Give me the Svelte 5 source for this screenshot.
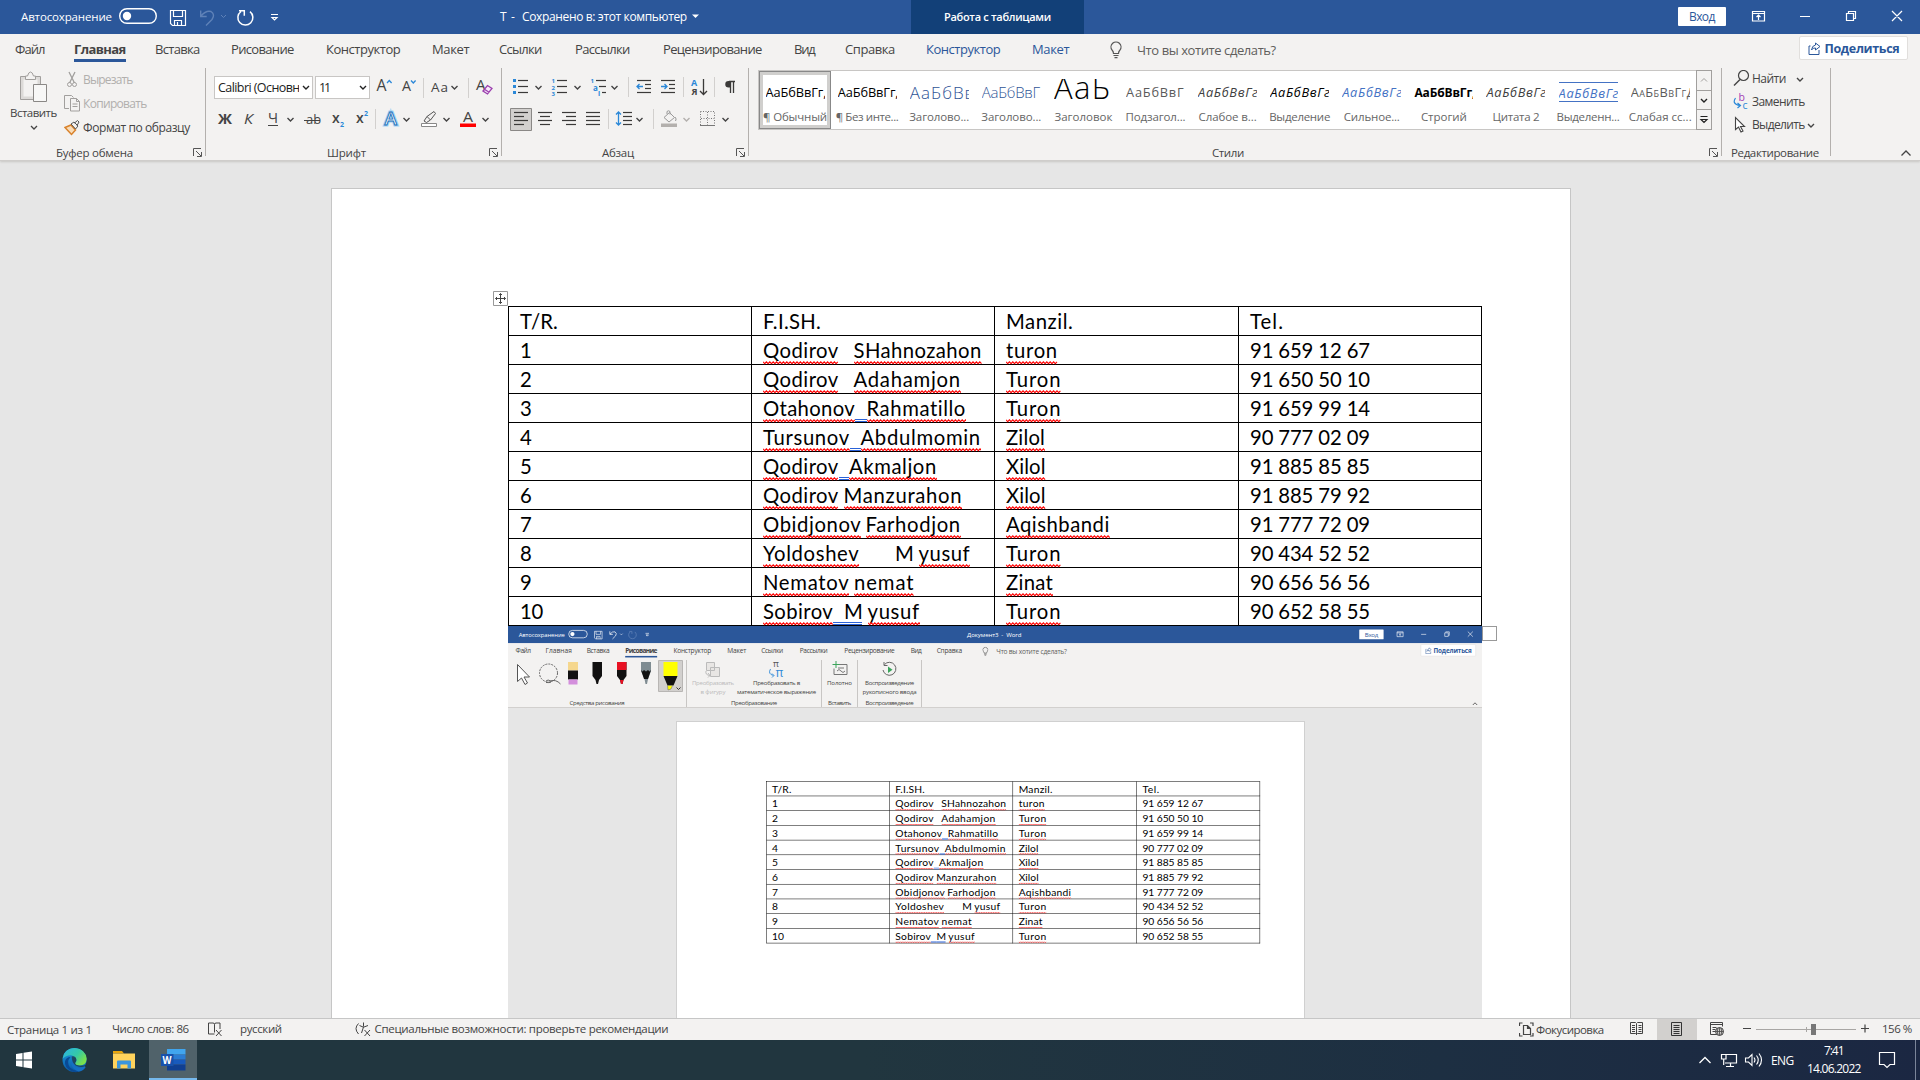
<script>
  // Stretches or tightens letter spacing so that a label fills its set width.
  function fit(el, w) {
    const n = el.textContent.length;
    if (n < 2) return;
    const range = document.createRange();
    range.selectNodeContents(el);
    const k = el.getBoundingClientRect().width / w || 1;
    const natural = range.getBoundingClientRect().width / k;
    el.style.letterSpacing = (w - natural) / (n - 0.5) + 'px';
  }

  // Lays items [width, drawing] one after another from x.
  function tiles(x, items) {
    let at = x;
    return items.map(([w, d]) => {
      const t = { x: at, w, d };
      at += w;
      return t;
    });
  }

  const chev = (x, y, c = '#444') => `<path d="M${x} ${y}l3 3 3-3" stroke="${c}" stroke-width="1.4"/>`;
  const vsep = (x, y) => `<path d="M${x}.5 ${y}v20" stroke="#d2d0ce"/>`;
  const lines = (a) => a.map(([x, y, w]) => `<path d="M${x} ${y}h${w}" stroke="#3b3a39" stroke-width="1.2"/>`).join('');
  const tx = (x, y, s, size, extra = '') => `<text x="${x}" y="${y}" font-size="${size}" stroke="none" fill="#444" ${extra}>${s}</text>`;

  const fontRow1 = tiles(369, [
    [29, tx(375.5, 91, 'А', 17, 'textLength="10" lengthAdjust="spacingAndGlyphs"') + '<path d="M386 83l2.300-2.500 2.300 2.500" stroke="#2b88d8" stroke-width="1.300"/>'],
    [24, tx(401, 91, 'А', 14, 'textLength="9" lengthAdjust="spacingAndGlyphs"') + '<path d="M410 80.500l2.300 2.500 2.300-2.500" stroke="#2b88d8" stroke-width="1.300"/>'],
    [4, vsep(422, 78)],
    [38, tx(430, 91.5, 'Аа', 13.5, 'textLength="17"') + chev(450.500, 86)],
    [6, vsep(467, 78)],
    [30, tx(475, 90, 'А', 15, 'textLength="9.500" lengthAdjust="spacingAndGlyphs"') + '<path d="M482 91l4.500-5.500 4.500 3-4.500 5.500zM483.500 89.200l4.500 3" stroke="#9b3fae" stroke-width="1.300" fill="#f7e9fa"/>']
  ]);
  const fontRow2 = tiles(212, [
    [26, tx(218, 124, 'Ж', 15, 'font-weight="700" textLength="14" lengthAdjust="spacingAndGlyphs"')],
    [24, tx(244, 124, 'К', 15, 'font-style="italic" textLength="9" lengthAdjust="spacingAndGlyphs"')],
    [34, tx(268, 123, 'Ч', 14.5, '') + '<path d="M268 125.500h10" stroke="#444"/>' + chev(287.500, 118)],
    [31, tx(306, 124, 'ab', 13) + '<path d="M304 120.500h16" stroke="#444"/>'],
    [24, tx(332, 123, 'x', 14, 'font-weight="600"') + tx(340, 127, '2', 7, 'style="fill:#2b88d8" font-weight="700"')],
    [22, tx(356, 123, 'x', 14, 'font-weight="600"') + tx(364, 116, '2', 7, 'style="fill:#2b88d8" font-weight="700"')],
    [4, vsep(375, 109)],
    [38, '<text x="384.500" y="124.500" font-size="18" font-weight="600" stroke="#a6d3f5" stroke-width="3" fill="#fff" textLength="12.500" lengthAdjust="spacingAndGlyphs">А</text><text x="384.500" y="124.500" font-size="18" font-weight="600" stroke="#1a6fb8" stroke-width=".9" fill="#fff" textLength="12.500" lengthAdjust="spacingAndGlyphs">А</text>' + chev(403.500, 118)],
    [38, '<path d="M424 121l3-4.500 7-5 1.500 2-5 6.500-4 2.500zM427 116.500l3.500 3.500" stroke="#555"/><path d="M421.500 123.500h15v3h-15z" stroke="#888" fill="#fff"/>' + chev(443.500, 118)],
    [39, tx(463, 122, 'А', 14.5, 'textLength="10" lengthAdjust="spacingAndGlyphs"') + '<path d="M460 123.500h16v3.500h-16z" fill="#f00" stroke="none"/>' + chev(482.500, 118)]
  ]);
  const parRow1 = tiles(508, [
    [38, [79, 85, 91].map((y) => `<path d="M513 ${y}h3v3h-3z" fill="#2b88d8" stroke="none"/>`).join('') + lines([[518, 80.500, 10], [518, 86.500, 10], [518, 92.500, 10]]) + chev(535.500, 86)],
    [40, tx(551.500, 83, '1', 6, 'font-weight="700" style="fill:#2b88d8"') + tx(551.500, 89.500, '2', 6, 'font-weight="700" style="fill:#2b88d8"') + tx(551.500, 96, '3', 6, 'font-weight="700" style="fill:#2b88d8"') + lines([[557, 80.500, 10], [557, 86.500, 10], [557, 92.500, 10]]) + chev(574.500, 86)],
    [38, tx(590.500, 83, '1', 6, 'font-weight="700" style="fill:#2b88d8"') + tx(593, 90.500, 'a', 8, 'font-weight="700" style="fill:#2b88d8"') + tx(598, 96, 'i', 7, 'font-weight="700" style="fill:#2b88d8"') + lines([[596, 80.500, 10], [599, 86.500, 7], [602, 92.500, 4]]) + chev(611.500, 86)],
    [8, vsep(628, 77)],
    [25, lines([[637, 80.500, 14], [645, 84.500, 6], [645, 88.500, 6], [637, 92.500, 14]]) + '<path d="M643 86.500h-6M639.500 84l-2.500 2.500 2.500 2.500" stroke="#2b88d8" stroke-width="1.300"/>'],
    [23, lines([[661, 80.500, 14], [669, 84.500, 6], [669, 88.500, 6], [661, 92.500, 14]]) + '<path d="M661 86.500h6M664.500 84l2.500 2.500-2.500 2.500" stroke="#2b88d8" stroke-width="1.300"/>'],
    [6, vsep(683, 77)],
    [25, tx(691, 85.500, 'А', 9, 'font-weight="700" style="fill:#2b88d8"') + tx(691.500, 95, 'Я', 9, 'font-weight="700"') + '<path d="M703.500 79v15M700 91l3.500 3.500 3.500-3.500" stroke="#3b3a39" stroke-width="1.300"/>'],
    [7, vsep(714, 77)],
    [22, '<path d="M735 81.500h-6M730.500 81v12M733.500 81v12" stroke="#3b3a39" stroke-width="1.300"/><path d="M731 81h-2.500a3 3 0 0 0 0 6.500h2.500z" fill="#3b3a39" stroke="none"/>']
  ]);
  const al = (x, shorts) => lines([[x, 112.500, 14], [x + shorts, 116.500, 10], [x, 120.500, 14], [x + shorts, 124.500, 10]]);
  const parRow2 = tiles(508, [
    [26, '<path d="M510.500 108.500h21v22h-21z" fill="#d2d0ce" stroke="#8a8886"/>' + al(514, 0)],
    [24, al(538, 2)],
    [24, al(562, 4)],
    [24, lines([[586, 112.500, 14], [586, 116.500, 14], [586, 120.500, 14], [586, 124.500, 14]])],
    [5, vsep(608, 109)],
    [36, lines([[623, 112.500, 9], [623, 116.500, 9], [623, 120.500, 9], [623, 124.500, 9]]) + '<path d="M618.500 112v13M616 114.500l2.500-2.500 2.500 2.500M616 122.500l2.500 2.500 2.500-2.500" stroke="#2b88d8" stroke-width="1.300"/>' + chev(636.500, 118)],
    [12, vsep(653, 109)],
    [40, '<path d="M664 117.500l5.500-5 5 5-5.500 4.500zM667 114v-2.500q1.500-1.500 3 0v3M675 117q2 2 .500 4" stroke="#999"/><path d="M661 123.500h16v3.500h-16z" fill="#b3b0ad" stroke="none"/>' + chev(683.500, 118, '#b3b0ad')],
    [37, '<path d="M700.500 111.500h14v14M700.500 111.500v14M707.500 112v13M701 118.500h13" stroke="#777" stroke-dasharray="1 1.500"/><path d="M700 125.500h15" stroke="#777"/>' + chev(722.500, 118)]
  ]);

  const tabs = [
    ['Файл', 15, 30], ['Главная', 74, 52], ['Вставка', 155, 45], ['Рисование', 231, 63], ['Конструктор', 326, 74.500],
    ['Макет', 432, 37.500], ['Ссылки', 499, 43], ['Рассылки', 575, 55], ['Рецензирование', 663, 99], ['Вид', 794, 21], ['Справка', 845, 50]
  ];
  const tableTabs = [['Конструктор', 926, 74.500], ['Макет', 1032, 37.500]];
  const spaced = (list) => list.map((t, i) => ({ label: t[0], w: t[2], gap: t[1] - (i ? list[i - 1][1] + list[i - 1][2] : 0) }));
  const allTabs = spaced([...tabs, ...tableTabs]);
  const plainTabs = spaced(tabs);

  const styles = [
    ['АаБбВвГг,', 61, '¶ Обычный', 64, 'plain'], ['АаБбВвГг,', 61, '¶ Без инте...', 63, 'plain'],
    ['АаБбВв', 65, 'Заголово...', 60, 'h1'], ['АаБбВвГ', 58, 'Заголово...', 60, 'h2'], ['АаБ', 57, 'Заголовок', 58, 'title'],
    ['АаБбВвГ', 58, 'Подзагол...', 60, 'sub'], ['АаБбВвГг', 60, 'Слабое в...', 58, 'it grey'], ['АаБбВвГг', 60, 'Выделение', 61, 'it'],
    ['АаБбВвГг', 60, 'Сильное...', 56, 'it blue'], ['АаБбВвГг,', 61, 'Строгий', 46, 'strong'], ['АаБбВвГг', 60, 'Цитата 2', 47, 'it grey'],
    ['АаБбВвГг', 60, 'Выделенн...', 63, 'it blue ruled'], ['АаБбВвГгД', 65, 'Слабая сс...', 63, 'caps']
  ];

  // Table rows: each name part is [text, width, mark]; marks: r = spelling, b = grammar.
  const rows = [
    [[['Qodirov', 75.500, 'r'], ['', 15], ['SHahnozahon', 128, 'r']], ['turon', 51.500], '91 659 12 67'],
    [[['Qodirov', 75.500, 'r'], ['', 15], ['Adahamjon', 107, 'r']], ['Turon', 55], '91 650 50 10'],
    [[['Otahonov', 92, 'r'], ['', 11.500, 'b'], ['Rahmatillo', 99.500, 'r']], ['Turon', 55], '91 659 99 14'],
    [[['Tursunov', 86.500, 'r'], ['', 11, 'b'], ['Abdulmomin', 120, 'r']], ['Zilol', 39], '90 777 02 09'],
    [[['Qodirov', 75.500, 'r'], ['', 10.500, 'b'], ['Akmaljon', 87.500, 'r']], ['Xilol', 39.500], '91 885 85 85'],
    [[['Qodirov', 75.500, 'r'], ['', 5], ['Manzurahon', 118.500, 'r']], ['Xilol', 39.500], '91 885 79 92'],
    [[['Obidjonov', 98, 'r'], ['', 4.500], ['Farhodjon', 95, 'r']], ['Aqishbandi', 103.500], '91 777 72 09'],
    [[['Yoldoshev', 96, 'r'], ['', 36], ['M', 18, ''], ['', 5.500], ['yusuf', 51.500, 'r']], ['Turon', 55], '90 434 52 52'],
    [[['Nematov', 86, 'r'], ['', 5], ['nemat', 60, 'r']], ['Zinat', 47], '90 656 56 56'],
    [[['Sobirov', 70, 'r'], ['', 11, 'b'], ['M', 18, 'b'], ['', 5.500], ['yusuf', 52, 'r']], ['Turon', 55], '90 652 58 55']
  ];
  const wave = (w) => {
    let d = 'M0 .8', up = false;
    for (let x = 1.7; x <= w + 1; x += 1.7) { d += `L${x} ${up ? 0.8 : 2.6}`; up = !up; }
    return d;
  };
</script>

{#snippet t(text, w, cls = '')}<span class="t {cls}" style:width="{w}px" use:fit={w}>{text}</span>{/snippet}

{#snippet strip(items, y, h)}
  <div class="strip">
    {#each items as i}
      <svg width={i.w} height={h} viewBox="{i.x} {y} {i.w} {h}">{@html i.d}</svg>
    {/each}
  </div>
{/snippet}

{#snippet launcher()}
  <svg class="launch" width="9" height="9" viewBox="0 0 9 9"><path d="M.5 8V.5H8M3 3l5 5M8.500 4v4.500H4" stroke="#555" /></svg>
{/snippet}

{#snippet titlebar(inner)}
  <div class="titlebar">
    {@render t('Автосохранение', 91, 'auto')}
    <svg width="180" height="34" viewBox="112 0 180 34" stroke="#fff">
      <rect x="119.700" y="8.700" width="36.600" height="14.600" rx="7.300" stroke-width="1.400" />
      <circle cx="127" cy="16" r="4.200" fill="#fff" stroke="none" />
      <path d="M170.500 10.500h15v15h-13l-2-2zM173.500 10.500v6h9v-6M174.500 25.500v-5h7v5M177.500 25v-3" stroke-width="1.200" />
      <path d="M200.700 10.500v6h6M201 16q5-6 10-4.500 4.500 3 1 8l-6 6" stroke={inner ? '#fff' : '#5f82b8'} stroke-width="1.400" />
      <path d="M221 15l2.500 2.500 2.500-2.500" stroke={inner ? '#fff' : '#5f82b8'} />
      <path d="M241 11.500a7.500 7.500 0 1 0 9 .2M239 10.700h5.300v5" stroke={inner ? '#5f82b8' : '#fff'} stroke-width="1.500" />
      <path d="M271 14.500h7M272 17.500l2.500 2.500 2.500-2.500z" stroke-width="1.200" />
    </svg>
    {#if inner}
      <div class="doc inner-doc">{@render t('Документ3  -  Word', 107)}</div>
    {:else}
      <div class="doc">
        {@render t('T', 7)}{@render t('-', 5)}{@render t('Сохранено в: этот компьютер', 165)}
        <svg width="7" height="4" viewBox="0 0 7 4"><path d="M0 .5h7L3.500 4z" fill="#fff" stroke="none" /></svg>
      </div>
      <div class="context">{@render t('Работа с таблицами', 107)}</div>
    {/if}
    <div class="login">{@render t('Вход', 26)}</div>
    <svg width="194" height="34" viewBox="1726 0 194 34" stroke="#fff">
      <path d="M1752.500 11.500h12v9.500h-12zM1752.500 13.500h12M1758.500 20v-4.500M1756.500 17l2-2 2 2M1800 16.500h10M1846.500 13.500h7v7h-7zM1848.500 13v-1.500h7v7h-1.500M1892 11l10 10M1902 11l-10 10" stroke-width="1.200" />
    </svg>
  </div>
{/snippet}

{#snippet tabbar(inner)}
  <div class="tabs">
    {#each inner ? plainTabs : allTabs as tab, i}
      <div class="tab" class:on={i === (inner ? 3 : 1)} class:tool={i > 10} style:margin-left="{tab.gap}px">{@render t(tab.label, tab.w)}</div>
    {/each}
    <svg class="bulb" width="12" height="18" viewBox="0 0 12 18"><path d="M3.500 12.500q0-2-1.500-3.500a5 5 0 1 1 8 0q-1.500 1.500-1.500 3.500zM3.500 14.500h5M4.500 16.700h3" stroke="#555" stroke-width="1.200" /></svg>
    <div class="ask">{@render t('Что вы хотите сделать?', 139)}</div>
    <div class="share">
      <svg width="13" height="13" viewBox="0 0 13 13"><path d="M2.500 4H1v8.500h10V8M7.500 1l4.500 3.500L7.500 8V6Q5 5.500 3.500 8 4 3.500 7.500 3z" stroke="#2b579a" /></svg>
      {@render t('Поделиться', 75)}
    </div>
  </div>
{/snippet}

{#snippet word(text, w, mark)}
  <span class="word" style:width="{w}px">
    {#if text}{@render t(text, w)}{/if}
    {#if mark === 'r'}<svg class="wavy" width={w} height="4" viewBox="0 0 {w} 4"><path d={wave(w)} stroke="#f00" stroke-width="1.100" /></svg>{/if}
    {#if mark === 'b'}<i class="double"></i>{/if}
  </span>
{/snippet}

{#snippet contacts()}
  <div class="table">
    <div class="cell">{@render t('T/R.', 38)}</div>
    <div class="cell">{@render t('F.I.SH.', 58)}</div>
    <div class="cell">{@render t('Manzil.', 67)}</div>
    <div class="cell">{@render t('Tel.', 33.500)}</div>
    {#each rows as [name, place, tel], i}
      <div class="cell">{@render t(String(i + 1), i === 9 ? 23 : 11.500)}</div>
      <div class="cell">{#each name as [s, w, m]}{@render word(s, w, m)}{/each}</div>
      <div class="cell">{@render word(place[0], place[1], 'r')}</div>
      <div class="cell">{@render t(tel, 120)}</div>
    {/each}
  </div>
{/snippet}

<div class="screen">
  {@render titlebar(false)}
  {@render tabbar(false)}

  <div class="ribbon">
    <section class="group clip">
      <div class="body">
        <div class="paste">
          <svg width="29" height="31" viewBox="22 71 29 31">
            <path d="M23.500 76.500h20v23h-20z" stroke="#a19f9d" fill="#dcdad8" /><path d="M26.500 79.500h14v17h-14z" fill="#f3f2f1" stroke="none" />
            <path d="M28.500 79.500v-3.500h2q1-4 3-4t3 4h2v3.500z" stroke="#a19f9d" fill="#f3f2f1" />
            <path d="M36.500 84.500h13v17h-13z" stroke="#8a8886" fill="#f7f7f6" />
          </svg>
          {@render t('Вставить', 47)}
          <svg width="8" height="5" viewBox="0 0 8 5"><path d="M1 1l3 3 3-3" stroke="#444" stroke-width="1.300" /></svg>
        </div>
        <div class="cmds">
          <div class="cmd off">
            <svg width="18" height="17" viewBox="64 71 18 17"><path d="M69 72l5.500 11M75 72l-5.500 11" stroke="#a19f9d" stroke-width="1.300" /><circle cx="69.500" cy="84.500" r="2" stroke="#a19f9d" /><circle cx="74.500" cy="84.500" r="2" stroke="#a19f9d" /></svg>
            {@render t('Вырезать', 50)}
          </div>
          <div class="cmd off">
            <svg width="18" height="17" viewBox="64 95 18 17"><path d="M69 108.500h-4.500v-13h7l2 2M70.500 98.500h6l3 3v9.500h-9zM76.500 98.500v3h3M72.500 104h5M72.500 106.500h5" stroke="#a19f9d" /></svg>
            {@render t('Копировать', 64)}
          </div>
          <div class="cmd">
            <svg width="18" height="17" viewBox="64 118 18 17"><path d="M65 126.500l6-2.500 4.500 5-4 4.500z" stroke="#d9822b" fill="#f8dcb8" stroke-width="1.500" /><path d="M71 123l3-2 4 4-2.500 3zM74.500 122l3-2.500 1.500 1.500-2 3.500" stroke="#555" /></svg>
            {@render t('Формат по образцу', 107)}
          </div>
        </div>
      </div>
      <div class="foot"><i></i>{@render t('Буфер обмена', 77)}{@render launcher()}</div>
    </section>

    <section class="group font">
      <div class="body col">
        <div class="row1">
          <div class="combo name"><span class="clipname">{@render t('Calibri (Основн', 82)}</span><svg width="8" height="5" viewBox="0 0 8 5"><path d="M1 1l3 3 3-3" stroke="#222" stroke-width="1.400" /></svg></div>
          <div class="combo size">{@render t('11', 11)}<svg width="8" height="5" viewBox="0 0 8 5"><path d="M1 1l3 3 3-3" stroke="#222" stroke-width="1.400" /></svg></div>
          {@render strip(fontRow1, 73, 27)}
        </div>
        <div class="row2 f2">{@render strip(fontRow2, 105, 27)}</div>
      </div>
      <div class="foot"><i></i>{@render t('Шрифт', 39)}{@render launcher()}</div>
    </section>

    <section class="group par">
      <div class="body col">
        <div class="row1 p1">{@render strip(parRow1, 73, 27)}</div>
        <div class="row2 p1">{@render strip(parRow2, 105, 27)}</div>
      </div>
      <div class="foot"><i></i>{@render t('Абзац', 32)}{@render launcher()}</div>
    </section>

    <section class="group sty">
      <div class="gallery">
        {#each styles as [sample, sw, label, lw, cls], i}
          <div class="style" class:sel={i === 0}>
            <div class="sample {cls}">{@render t(sample, sw)}</div>
            {@render t(label, lw, 'name')}
          </div>
        {/each}
        <div class="scroller">
          <svg width="14" height="19" viewBox="0 0 14 19"><path d="M4 10.500l3-3 3 3" stroke="#a19f9d" /></svg>
          <svg width="14" height="18" viewBox="0 0 14 18"><path d="M4 8l3 3 3-3" stroke="#222" stroke-width="1.400" /></svg>
          <svg width="14" height="18" viewBox="0 0 14 18"><path d="M3.500 6.500h7M4 9.500l3 3 3-3z" stroke="#222" stroke-width="1.200" /></svg>
        </div>
      </div>
      <div class="foot"><i></i>{@render t('Стили', 32)}{@render launcher()}</div>
    </section>

    <section class="group edit">
      <div class="finds">
        <div class="cmd">
          <svg width="18" height="18" viewBox="1733 70 18 18"><circle cx="1743.500" cy="75.500" r="5" stroke="#444" stroke-width="1.200" /><path d="M1740 79.500l-6 6" stroke="#444" stroke-width="1.400" /></svg>
          {@render t('Найти', 34)}
          <svg class="dd" width="8" height="5" viewBox="0 0 8 5"><path d="M1 1l3 3 3-3" stroke="#444" stroke-width="1.400" /></svg>
        </div>
        <div class="cmd">
          <svg width="18" height="18" viewBox="1733 93 18 18"><text x="1738.500" y="101" font-size="10.500" fill="#a33fb5" stroke="none">b</text><text x="1742.500" y="109" font-size="10.500" fill="#2b88d8" stroke="none">c</text><path d="M1735.500 98q-4 6 4.500 7.500M1737.500 103l3 2.500-3 2.500" stroke="#2b88d8" stroke-width="1.200" /></svg>
          {@render t('Заменить', 53)}
        </div>
        <div class="cmd">
          <svg width="18" height="18" viewBox="1733 116 18 18"><path d="M1735.500 117.500v12l3-2.500 2.500 5 2-1-2.500-4.500h4z" stroke="#444" stroke-width="1.100" fill="#fff" /></svg>
          {@render t('Выделить', 53)}
          <svg class="near" width="8" height="5" viewBox="0 0 8 5"><path d="M1 1l3 3 3-3" stroke="#444" stroke-width="1.400" /></svg>
        </div>
      </div>
      <div class="foot mid">{@render t('Редактирование', 88)}</div>
    </section>
    <svg class="fold" width="12" height="8" viewBox="0 0 12 8"><path d="M1.500 6.500L6 2l4.500 4.500" stroke="#444" stroke-width="1.300" /></svg>
  </div>

  <main>
    <div class="page">
      <div class="holder">
        <svg class="grip" width="15" height="15" viewBox="0 0 15 15"><path d="M.5.5h14v14H.5z" stroke="#999" fill="#fff" /><path d="M7.500 2.500v10M2.500 7.500h10M6 4l1.500-1.500L9 4M6 11l1.500 1.500L9 11M4 6L2.500 7.500 4 9M11 6l1.500 1.500L11 9" stroke="#444" /></svg>
        {@render contacts()}
        <i class="endmark"></i>
      </div>

      <div class="picture">
        <div class="mini head"><div class="full">{@render titlebar(true)}{@render tabbar(true)}</div></div>
        <div class="mribbon">
          <div class="mg tools">
            <svg width="178" height="34" viewBox="508 660 178 34">
              <path d="M517.500 664.500v17l4-3.500 3.500 6.500 2.500-1.500-3.500-6h5.500z" stroke="#555" fill="#fff" />
              <circle cx="548.500" cy="673" r="9" stroke="#666" stroke-dasharray="2 1" /><path d="M546 681q2-2 4.500 0t-4.500 1.500M550 681q6-2 10.500 3" stroke="#666" />
              <g stroke="none"><path d="M568 662h10v8.500h-10z" fill="#f5d78e" /><path d="M568 670.500h10v9h-10z" fill="#111" /><path d="M568.500 679.500h9v5h-9z" fill="#d38fdc" />
                <path d="M592.500 662h9.500v14l-3 4-1 4h-1.500l-1-4-3-4z" fill="#111" />
                <path d="M617 662h9.500v14l-3 4-1 4H621l-1-4-3-4z" fill="#111" /><path d="M617 662h9.500v8H617zM620 680h3.500l-1 4H621z" fill="#e81123" />
                <path d="M641 662h10v9l-3 8-1 5h-1.500l-1-5-3.500-8z" fill="#7f8c92" /><path d="M641 670l1.500 1.500 1.500-1.500 2 1.500 2-1.500 1.500 1.500 1.500-1.500-3 9h-4z" fill="#111" /></g>
              <path d="M658.500 660.500h24v31h-24z" fill="#d2d0ce" stroke="#b8b6b4" />
              <path d="M663.500 662h14v14h-14z" fill="#ff0" stroke="none" /><path d="M663.500 676h14l-4 9.500h-6z" fill="#111" stroke="none" /><path d="M667.500 685.500h5l-1.500 3.500-3 1z" fill="#ff0" stroke="#666" stroke-width=".5" /><path d="M676.500 687.500l2 2 2-2" stroke="#333" />
            </svg>
            <div class="ml">{@render t('Средства рисования', 55)}</div>
          </div>
          <div class="mg conv">
            <div class="mcols">
              <div class="mcol a off">
                <svg width="16" height="18" viewBox="705 661 16 18"><path d="M706.500 662.500h8v8h-8zM710.500 667.500h9v9h-9z" fill="#e8e6e4" stroke="#bbb" /><path d="M706 671q-1 4 4 4.500M708 673l2 2.500-2 2" stroke="#bbb" /></svg>
                {@render t('Преобразовать', 42)}{@render t('в фигуру', 25)}
              </div>
              <div class="mcol b">
                <svg width="17" height="18" viewBox="769 661 17 18"><text x="774" y="667" font-size="9" fill="#555" stroke="none">π</text><text x="776.500" y="677" font-size="12" fill="#2b88d8" stroke="none">π</text><path d="M771.500 669q-3 5 3 6.500M773 673.500l2 2-2 2" stroke="#2b88d8" stroke-width=".9" /></svg>
                {@render t('Преобразовать в', 47)}{@render t('математическое выражение', 79)}
              </div>
            </div>
            <div class="ml">{@render t('Преобразование', 46)}</div>
          </div>
          <div class="mg canv">
            <div class="mcol"><svg width="16" height="18" viewBox="831 661 16 18"><path d="M837 664.500h9v10h-13v-6M836 671q2-3 4 0t4 0M837 668h6" stroke="#777" /><path d="M835 661v7M831.500 664.500h7" stroke="#3aa45a" /></svg>{@render t('Полотно', 25)}</div>
            <div class="ml">{@render t('Вставить', 23)}</div>
          </div>
          <div class="mg play">
            <div class="mcol"><svg width="16" height="18" viewBox="881 661 16 18"><path d="M883.500 664.500a6.500 6.500 0 1 1-1.500 5.500M883 662v3.500h3.500" stroke="#666" /><path d="M887 666.500v6.500l4.500-3.300z" fill="#3aa45a" stroke="none" /></svg>{@render t('Воспроизведение', 49)}{@render t('рукописного ввода', 54)}</div>
            <div class="ml">{@render t('Воспроизведение', 48)}</div>
          </div>
          <svg class="mfold" width="6" height="4" viewBox="0 0 6 4"><path d="M.8 3L3 .8 5.200 3" stroke="#444" stroke-width=".8" /></svg>
        </div>
        <div class="mdoc">
          <div class="mpage"><div class="mini body2"><div class="small">{@render contacts()}</div></div></div>
        </div>
      </div>
    </div>
  </main>

  <footer class="status">
    {@render t('Страница 1 из 1', 85, 'low')}
    {@render t('Число слов: 86', 77, 's1')}
    <svg class="s2" width="15" height="15" viewBox="207 1022 15 15"><path d="M214.500 1034h-6v-11h4.500q1.500 0 1.500 1.500v8M214.500 1024.500q0-1.500 1.500-1.500h4v6M216 1030l5.500 6M221.500 1030l-5.500 6" stroke="#444" /></svg>
    {@render t('русский', 42, 's3')}
    <svg class="s4" width="16" height="15" viewBox="355 1022 16 15"><path d="M358.500 1023.500q-5 5 0 10.500M363.500 1022.500v4M359.500 1025.500l3.500 1.500h1l4-1.500M363.500 1027l-2 6M364.500 1030l5.500 6M370 1030l-5.500 6" stroke="#444" /></svg>
    {@render t('Специальные возможности: проверьте рекомендации', 294, 's5')}
    <div class="right">
      <svg width="15" height="15" viewBox="1519 1021 15 15"><path d="M1519.500 1025v-3h3M1530 1022h3v3M1519.500 1032v3h3M1530 1035h3v-3M1523.500 1024.500h4l3 3v6h-7zM1527.500 1024.500v3h3" stroke="#444" stroke-width="1.200" /></svg>
      {@render t('Фокусировка', 68, 'focus')}
      <svg width="273" height="21" viewBox="1606 1019 273 21">
        <path d="M1657 1019h40v21h-40z" fill="#d2d0ce" stroke="none" />
        <path d="M1636.500 1024v11M1630.500 1022.500h5l1 1 1-1h5v11h-5l-1 1-1-1h-5zM1632 1025.500h3M1632 1027.500h3M1632 1029.500h3M1632 1031.500h3M1638.500 1025.500h3M1638.500 1027.500h3M1638.500 1029.500h3M1638.500 1031.500h3" stroke="#444" />
        <path d="M1671.500 1022.500h10v13h-10zM1673.500 1025.500h6M1673.500 1027.500h6M1673.500 1029.500h6M1673.500 1031.500h6M1673.500 1033.500h6" stroke="#333" />
        <path d="M1717 1034.500h-6.500v-12h12v4M1711 1024.500h11M1712.500 1027.500h4M1712.500 1029.500h3M1712.500 1031.500h3" stroke="#444" /><circle cx="1719.500" cy="1031.500" r="4" stroke="#444" fill="#d2d0ce" /><path d="M1715.500 1031.500h8M1719.500 1027.500v8M1718 1028q-1.500 3.500 0 7M1721 1028q1.500 3.500 0 7" stroke="#444" stroke-width=".8" />
        <path d="M1743 1028.500h8M1861 1028.500h8M1865 1024.500v8" stroke="#444" stroke-width="1.200" />
        <path d="M1756 1029.500h100M1806.500 1027v5" stroke="#a8a6a4" /><path d="M1811 1024h5v11h-5z" fill="#777" stroke="none" />
      </svg>
      {@render t('156 %', 30, 'pct')}
    </div>
  </footer>

  <footer class="taskbar">
    <svg width="48" height="40" viewBox="0 1040 48 40"><path d="M16 1054l6.500-1v6.500H16zM23.500 1052.800l8.500-1.200v7.900h-8.500zM16 1060.500h6.500v6.500l-6.500-1zM23.500 1060.500h8.500v7.900l-8.500-1.200z" fill="#fff" stroke="none" /></svg>
    <svg width="101" height="40" viewBox="48 1040 101 40">
      <defs>
        <linearGradient id="ea" x1="0" y1="0" x2="1" y2=".6"><stop offset="0" stop-color="#2bb3e8" /><stop offset=".6" stop-color="#35c9a5" /><stop offset="1" stop-color="#7be04b" /></linearGradient>
        <linearGradient id="eb" x1="0" y1="0" x2="0" y2="1"><stop offset="0" stop-color="#1b9de2" /><stop offset="1" stop-color="#0c59a4" /></linearGradient>
      </defs>
      <g stroke="none">
        <circle cx="74.500" cy="1060" r="12" fill="url(#eb)" />
        <path d="M62.700 1058.500q1.500-10.500 12-10.500 11 1 12 11-.5 6.500-7 6.500-5 0-4.500-2.500 2-1.500 1-4-3-5-8-3.500-3.500 1-5.500 3z" fill="url(#ea)" />
        <path d="M70.500 1057q-4.500 5-.5 10.500 5 5 13 2-5 4-11 2-8-4-7-10 1-4.500 5.500-4.500z" fill="#0a4a94" />
        <path d="M75 1063q-.5 4 4.500 4.500 3 0 5.500-1.500l.5 1.500q-3 4-7 4-6-2-7-7-.5-5 3.500-7 2.500 2 0 5.500z" fill="#156fc2" />
        <path d="M75.200 1062.500q2-2 .5-5-2-2-4-1 0 6 4 9 5 2.500 9.500.5l.8.300q1.200-1.800.5-1.500-4 1.500-8 .7-4-1-3.300-3z" fill="#21363f" opacity=".75" />
        <path d="M113 1051h9l2 2.500h-11z" fill="#e8a50c" /><path d="M113 1053.500h22v15h-22z" fill="#ffd35c" /><path d="M117 1068.500v-7q0-1 1-1h12q1 0 1 1v7h-3.500v-4h-7v4z" fill="#3c96dc" />
      </g>
    </svg>
    <div class="app">
      <svg width="48" height="38" viewBox="149 1040 48 38"><g stroke="none"><path d="M167 1049h18.500v5.500H167z" fill="#41a5ee" /><path d="M167 1054.500h18.500v5H167z" fill="#2b7cd3" /><path d="M167 1059.500h18.500v5H167z" fill="#185abd" /><path d="M167 1064.500h18.500v6H167z" fill="#103f91" /><path d="M161 1054h12.500v12H161z" fill="#1751ab" /><text x="162.500" y="1063.800" font-size="10" font-weight="700" fill="#fff" textLength="9" lengthAdjust="spacingAndGlyphs">W</text></g></svg>
    </div>
    <div class="tray">
      <svg width="74" height="40" viewBox="1696 1040 74 40" stroke="#fff">
        <path d="M1699.500 1063l5.500-5.500 5.500 5.500" stroke-width="1.300" />
        <path d="M1726 1054.500h10.500v8.500H1725M1730.500 1063v3M1726 1066.500h8M1721.500 1054.500h4.500v4.500h-4.500zM1723.700 1059v6" stroke-width="1.200" />
        <path d="M1745.500 1058h3l3.500-3.500v11l-3.500-3.500h-3zM1754 1057.500q2 2.500 0 5M1756.500 1055.500q3.500 4.500 0 9M1759 1053.500q5 6.500 0 13" stroke-width="1.100" />
      </svg>
      {@render t('ENG', 23, 'lang')}
      <div class="clock">{@render t('7:41', 20)}{@render t('14.06.2022', 54)}</div>
      <svg width="59" height="40" viewBox="1861 1040 59 40"><path d="M1879.500 1052.500h15v12h-4.500l-3 3-3-3h-4.500z" stroke="#fff" stroke-width="1.200" /><path d="M1915.500 1040v40" stroke="#7b8599" /></svg>
    </div>
  </footer>
</div>

<style>
  :global(body) { margin: 0; overflow: hidden; }
  .screen { width: 1920px; height: 1080px; display: flex; flex-direction: column; overflow: hidden; background: #e6e6e6; font-family: "Open Sans", "Noto Sans", sans-serif; font-size: 11.5px; color: #444; }
  svg { display: block; fill: none; flex: none; }
  .t { display: block; white-space: pre; flex: none; }
  .strip { display: flex; }

  .titlebar { height: 34px; flex: none; display: flex; align-items: center; background: #2b579a; color: #fff; width: 1920px; }
  .titlebar :global(.auto) { margin-left: 21px; margin-bottom: 2px; }
  .doc { box-sizing: border-box; height: 34px; display: flex; align-items: center; margin-left: 208px; gap: 5px; width: 411px; font-size: 12px; padding-bottom: 2px; }
  .doc :global(.t:nth-child(1)) { margin-right: -1px; }
  .doc :global(.t:nth-child(2)) { margin-right: 1px; }
  .inner-doc { margin-left: 613px; width: 773px; }
  .context { width: 173px; height: 34px; background: #124078; display: flex; align-items: center; justify-content: center; margin-right: 594px; box-sizing: border-box; padding-bottom: 2px; font-weight: 600; font-size: 11px; }
  .login { width: 48px; height: 19px; background: #fff; color: #2b579a; display: flex; align-items: center; justify-content: center; font-size: 12px; line-height: 17px; border-radius: 1px; margin-bottom: 1px; }
  .login :global(.t) { margin-bottom: 1px; }

  .tabs { height: 34px; flex: none; display: flex; align-items: center; background: #f3f2f1; font-size: 13px; width: 1920px; }
  .tab { height: 28px; line-height: 30px; box-sizing: border-box; margin-bottom: 6px; }
  .tab.on { font-weight: 700; border-bottom: 3px solid #2b579a; }
  .tab.tool { color: #2b579a; }
  .bulb { margin: 0 0 2px 40px; }
  .ask { margin-left: 15.5px; margin-bottom: 3px; color: #605e5c; }
  .share { margin-left: auto; margin-right: 12px; margin-bottom: 6px; width: 107px; height: 22px; border: 1px solid #e1dfdd; border-radius: 2px; background: #fff; display: flex; align-items: center; justify-content: center; gap: 4px; color: #2b579a; font-weight: 700; font-size: 12.5px; }

  .ribbon { height: 92px; flex: none; display: flex; background: #f3f2f1; position: relative; z-index: 2; box-shadow: 0 0 0 1px #cfcdcb, 0 2px 2px #c8c6c4; clip-path: inset(0 0 -5px 0); }
  .group { height: 88px; display: flex; flex-direction: column; box-sizing: border-box; border-right: 1px solid #b3b0ad; justify-content: space-between; }
  .clip { width: 206px; }
  .font { width: 296px; }
  .par { width: 247px; }
  .sty { width: 973px; }
  .edit { width: 109px; }
  .foot { height: 13px; line-height: 13px; margin-bottom: -3px; padding: 0 2px 0 0; display: grid; grid-template-columns: 1fr auto 1fr; align-items: center; flex: none; }
  .foot.mid { display: flex; justify-content: center; }
  .clip .foot { padding-left: 0; grid-template-columns: 56px 77px 1fr; }
  .font .foot { grid-template-columns: 121px 39px 1fr; }
  .par .foot { grid-template-columns: 100px 32px 1fr; }
  .sty .foot { grid-template-columns: 463px 32px 1fr; }
  .launch { justify-self: end; margin-right: 1px; }
  .body { display: flex; height: 68px; }
  .body.col { flex-direction: column; }
  .paste { width: 47px; margin: 3px 0 0 10px; display: flex; flex-direction: column; align-items: center; gap: 3px; }
  .paste > svg:last-child { margin-top: 2px; }
  .cmds { margin-left: 7px; padding-top: 3px; display: flex; flex-direction: column; gap: 7px; }
  .cmd { display: flex; align-items: center; gap: 1px; height: 17px; font-size: 12px; }
  .cmd.off { color: #b1afad; }
  .row1 { display: flex; margin-top: 5px; height: 27px; }
  .row2 { margin-top: 5px; height: 27px; }
  .f2 { padding-left: 6px; }
  .p1 { padding-left: 6px; }
  .combo { height: 21px; margin-top: 3px; box-sizing: content-box; border: 1px solid #c8c6c4; background: #fff; color: #222; display: flex; align-items: center; justify-content: space-between; padding: 0 2px 0 3px; font-size: 12.5px; }
  .combo.name { width: 92px; margin-left: 8px; }
  .combo.size { width: 48px; margin-left: 2px; }
  .clipname { width: 81px; overflow: hidden; }

  .gallery { margin: 2px 0 0 9px; width: 952px; height: 58px; border: 1px solid #c8c6c4; background: #fff; display: flex; box-sizing: content-box; }
  .style { width: 72.1px; height: 58px; box-sizing: border-box; display: flex; flex-direction: column; align-items: center; flex: none; font-size: 11.5px; color: #666; overflow: hidden; }
  .style.sel { border: 1px solid #888; box-shadow: inset 0 0 0 3px #d0cfcd; }
  .style.sel .sample { margin-top: 7px; }
  .sample { width: 59px; height: 22px; margin: 8px 0; overflow: hidden; line-height: 27px; font-size: 12.8px; color: #000; flex: none; box-sizing: border-box; }
  .sample.h1 { font-size: 17px; font-weight: 300; color: #2f5496; }
  .sample.h2 { font-size: 15px; font-weight: 300; color: #2f5496; line-height: 26px; }
  .sample.title { font-size: 31px; font-weight: 300; line-height: 17px; }
  .sample.sub { color: #5a5a5a; }
  .sample.it { font-style: italic; }
  .sample.grey { color: #404040; }
  .sample.blue { color: #4472c4; }
  .sample.strong { font-weight: 700; font-size: 12px; }
  .sample.ruled { border-top: 1px solid #4472c4; border-bottom: 1px solid #4472c4; height: 20px; margin: 11px 0 7px; line-height: 20px; }
  .sample.caps { font-variant: small-caps; color: #5a5a5a; }
  .style :global(.name) { line-height: 16px; }
  .scroller { margin-left: auto; width: 14px; border: 1px solid #a19f9d; margin-top: -1px; margin-right: -1px; height: 58px; background: #f3f2f1; flex: none; }
  .scroller svg + svg { border-top: 1px solid #a19f9d; }

  .finds { display: flex; flex-direction: column; gap: 5px; padding: 2px 0 0 11px; }
  .finds .cmd { height: 18px; }
  .finds :global(.t) { margin-bottom: 1px; }
  .dd { margin-left: 9px; }
  .near { margin-left: 1px; }
  .fold { margin: 81px 8px 0 auto; }

  main { height: 858px; flex: none; overflow: hidden; }
  .page { margin: 28px 0 0 331px; width: 1062px; height: 900px; border: 1px solid #c6c6c6; background: #fff; padding: 117px 0 0 176px; box-sizing: content-box; }
  .holder { position: relative; width: 974px; }
  .grip { position: absolute; left: -15px; top: -15px; }
  .endmark { position: absolute; left: 974px; top: 320px; width: 13px; height: 13px; border: 1px solid #999; background: #fff; }
  .table { width: 973px; display: grid; grid-template-columns: 243px 243px 244px 243px; grid-auto-rows: 29px; border-left: 1px solid #000; border-top: 1px solid #000; font-family: Lato, "Open Sans", sans-serif; font-size: 20.3px; line-height: 28px; color: #000; }
  .cell { box-sizing: border-box; border-right: 1px solid #000; border-bottom: 1px solid #000; padding: 0 0 0 11px; display: flex; }
  .word { position: relative; height: 27px; flex: none; }
  .wavy { position: absolute; left: 0; top: 24.5px; overflow: hidden; }
  .double { position: absolute; left: 0; right: 0; top: 25px; height: 1px; border-top: 1px solid #2a62d8; border-bottom: 1px solid #2a62d8; }

  .picture { width: 974px; height: 392px; overflow: hidden; display: flex; flex-direction: column; background: #e6e6e6; }
  .mini { overflow: hidden; flex: none; }
  .head { height: 34px; width: 974px; background: #f3f2f1; }
  .full { width: 1920px; transform: scale(0.5073); transform-origin: 0 0; }
  .mribbon { height: 47px; flex: none; display: flex; background: #f3f2f1; border-bottom: 1.500px solid #d2d0ce; font-size: 6.1px; line-height: 8.5px; }
  .mg { height: 47px; box-sizing: border-box; border-right: 1px solid #c8c6c4; display: flex; flex-direction: column; justify-content: space-between; }
  .tools { width: 179px; }
  .conv { width: 135px; }
  .canv { width: 36px; }
  .play { width: 64px; }
  .ml { display: flex; justify-content: center; }
  .mcols { display: flex; }
  .mcol { display: flex; flex-direction: column; align-items: center; padding-top: 1px; }
  .a { width: 42px; margin-left: 5px; }
  .b { width: 79px; margin-left: 3px; }
  .off { color: #bbb; }
  .mfold { margin: 42px 4px 0 auto; }
  .mdoc { flex: 1; padding: 13px 0 0 168px; }
  .mpage { width: 627px; height: 320px; border: 1px solid #d0d0d0; background: #fff; }
  .body2 { margin: 59px 0 0 89px; width: 496px; height: 164px; }
  .small { width: 975px; transform: scale(0.5073); transform-origin: 0 0; }

  .status { height: 21px; flex: none; border-top: 1px solid #c6c6c6; background: #f3f2f1; display: flex; align-items: center; font-size: 11.5px; padding-left: 7px; }
  .status :global(.t) { margin-bottom: 2px; }
  .status :global(.low), .status :global(.focus) { margin-bottom: 0; }
  .status :global(.s1) { margin-left: 20px; }
  .s2 { margin-left: 18px; }
  .status :global(.s3) { margin-left: 18px; }
  .s4 { margin-left: 73px; }
  .status :global(.s5) { margin-left: 3.5px; }
  .right { margin-left: auto; margin-right: 8px; display: flex; align-items: center; }
  .right :global(.focus) { margin-left: 2px; margin-right: 2px; }
  .right :global(.pct) { margin-left: 3px; }

  .taskbar { height: 40px; flex: none; display: flex; background: linear-gradient(90deg, #21363f 0%, #21363f 45%, #1d2f42 75%, #1b2742 100%); color: #fff; }
  .app { width: 48px; height: 38px; background: #50626a; border-bottom: 2px solid #76b9ed; }
  .tray { margin-left: auto; display: flex; align-items: center; font-size: 12px; }
  .tray :global(.lang) { margin-left: 1px; }
  .clock { width: 67px; box-sizing: border-box; padding-left: 13px; display: flex; flex-direction: column; align-items: center; line-height: 18px; }
</style>
